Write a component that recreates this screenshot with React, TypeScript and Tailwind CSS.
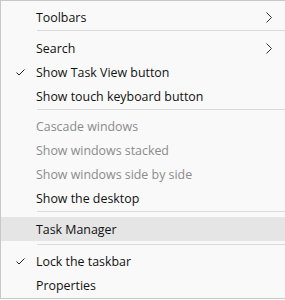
import React from 'react';

type Item = { label: string; disabled?: boolean; checked?: boolean; submenu?: boolean; active?: boolean };

const Check = () => (
    <svg width="9" height="7" viewBox="0 0 9 7" className="text-[#222]">
        <path d="M0.5 3.5 L3 6 L8.5 0.5" fill="none" stroke="currentColor" strokeWidth="1" />
    </svg>
);

const Chevron = () => (
    <svg width="6" height="11" viewBox="0 0 6 11" className="text-[#333]">
        <path d="M0.5 0.5 L5.5 5.5 L0.5 10.5" fill="none" stroke="currentColor" strokeWidth="1" />
    </svg>
);

const Row: React.FC<{ item: Item }> = ({ item }) => (
    <div className={`flex items-center h-6 ${item.active ? 'bg-[#e5e5e5]' : ''}`}>
        <div className="w-9 flex justify-center pl-[2px] pt-px">{item.checked && <Check />}</div>
        <span className={`flex-1 pt-[3px] -ml-px ${item.disabled ? 'text-[#8b8b8b]' : 'text-[#111]'}`}>{item.label}</span>
        {item.submenu && (
            <div className="w-4 mr-[8px] flex justify-center">
                <Chevron />
            </div>
        )}
    </div>
);

const Sep: React.FC<{ top?: string; bottom?: string }> = ({ top = 'mt-px', bottom = 'mb-[5px]' }) => (
    <div className={`ml-9 h-px bg-[#d9d9d9] ${top} ${bottom}`} />
);

const App: React.FC = () => {
    return (
        <div className="w-[285px] h-[300px] bg-white">
            <div
                className="w-[285px] h-[299px] bg-[#f9f9f9] border-t border-l border-b border-[#c8c8c8] pt-1 text-[12.4px] leading-none"
                style={{ fontFamily: '"Open Sans", "Noto Sans", sans-serif' }}
            >
                <Row item={{ label: 'Toolbars', submenu: true }} />
                <Sep />
                <Row item={{ label: 'Search', submenu: true }} />
                <Row item={{ label: 'Show Task View button', checked: true }} />
                <Row item={{ label: 'Show touch keyboard button' }} />
                <Sep bottom="mb-[4px]" />
                <Row item={{ label: 'Cascade windows', disabled: true }} />
                <Row item={{ label: 'Show windows stacked', disabled: true }} />
                <Row item={{ label: 'Show windows side by side', disabled: true }} />
                <Row item={{ label: 'Show the desktop' }} />
                <Sep />
                <Row item={{ label: 'Task Manager', active: true }} />
                <Sep top="mt-[3px]" bottom="mb-[4px]" />
                <Row item={{ label: 'Lock the taskbar', checked: true }} />
                <Row item={{ label: 'Properties' }} />
            </div>
        </div>
    );
};

export default App;
